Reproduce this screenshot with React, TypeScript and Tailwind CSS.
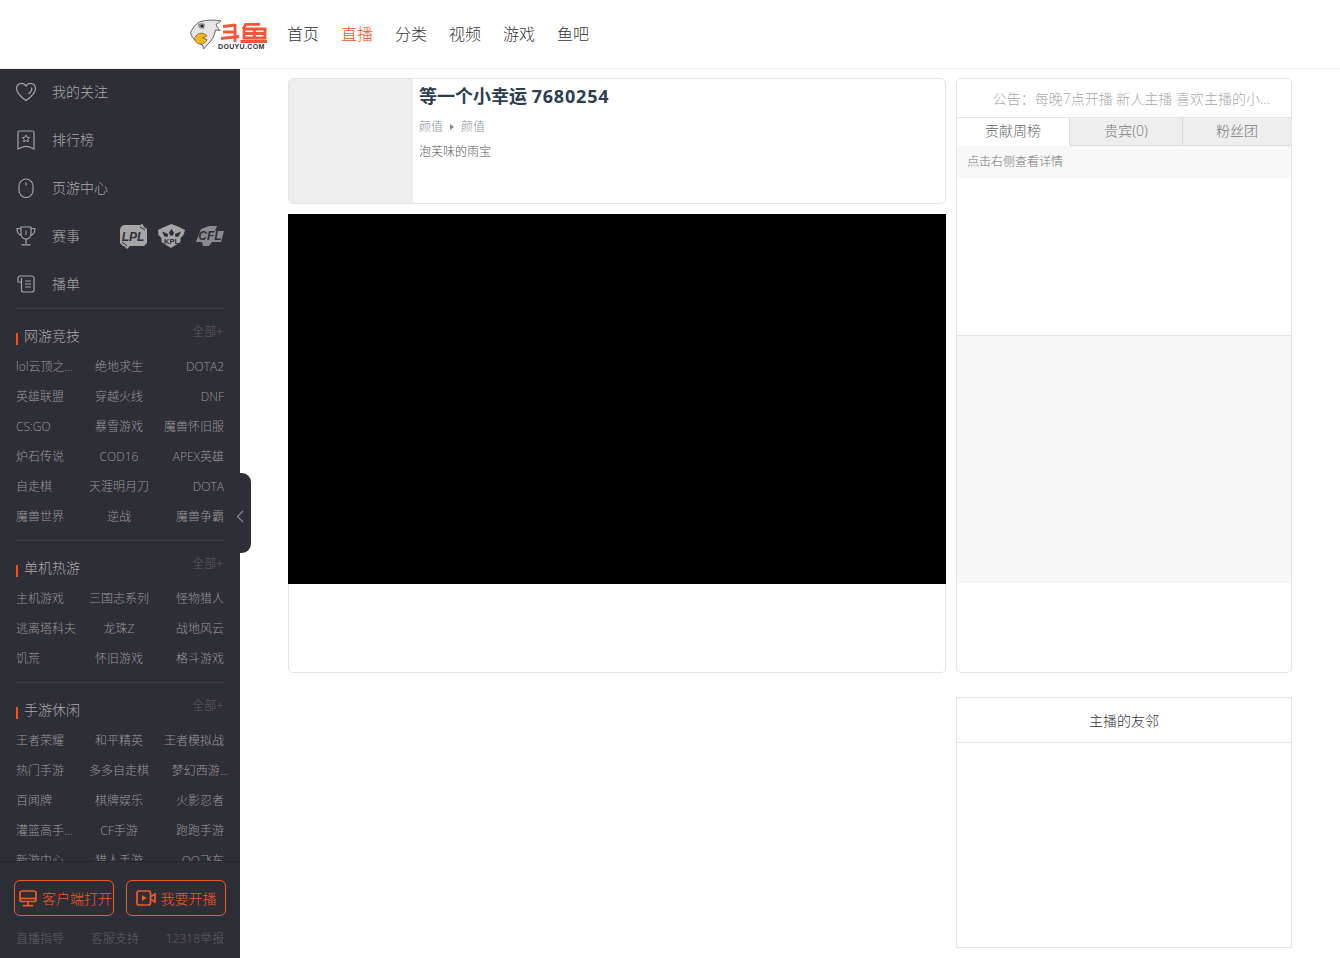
import React from "react";

const font = { fontFamily: '"Open Sans", "Noto Sans CJK SC", sans-serif' };

const sections = [
  {
    title: "网游竞技",
    items: ["lol云顶之...", "绝地求生", "DOTA2", "英雄联盟", "穿越火线", "DNF", "CS:GO", "暴雪游戏", "魔兽怀旧服", "炉石传说", "COD16", "APEX英雄", "自走棋", "天涯明月刀", "DOTA", "魔兽世界", "逆战", "魔兽争霸"],
  },
  {
    title: "单机热游",
    items: ["主机游戏", "三国志系列", "怪物猎人", "逃离塔科夫", "龙珠Z", "战地风云", "饥荒", "怀旧游戏", "格斗游戏"],
  },
  {
    title: "手游休闲",
    items: ["王者荣耀", "和平精英", "王者模拟战", "热门手游", "多多自走棋", "梦幻西游...", "百闻牌", "棋牌娱乐", "火影忍者", "灌篮高手...", "CF手游", "跑跑手游", "新游中心", "猎人手游", "QQ飞车"],
  },
];

function Heart() {
  return (
    <svg className="shrink-0" width="22" height="20" viewBox="0 0 22 20" fill="none" stroke="#a3a3a6" strokeWidth="1.3">
      <path d="M11 18.500C6 15 1.500 11.500 1.500 6.500 1.500 3.500 3.800 1.300 6.500 1.300c1.900 0 3.500 1 4.500 2.700C12 2.300 13.600 1.300 15.500 1.300c2.700 0 5 2.200 5 5.200 0 5-4.500 8.500-9.500 12z" />
      <path d="M16.500 5.500c.8 2-.5 4.500-3 6.500" />
    </svg>
  );
}
function Ribbon() {
  return (
    <svg width="18" height="20" viewBox="0 0 18 20" fill="none" stroke="#a3a3a6" strokeWidth="1.2">
      <path d="M2.500 1h13A1.500 1.500 0 0 1 17 2.500V19l-4-1.800c-2.500-1-5.500-1-8 0L1 19V2.500A1.500 1.500 0 0 1 2.500 1z" />
      <path d="M9 5l1.100 2.300 2.500.3-1.800 1.700.5 2.500L9 10.600l-2.300 1.200.5-2.500-1.800-1.700 2.500-.3z" strokeWidth="1" />
    </svg>
  );
}
function Mouse() {
  return (
    <svg width="16" height="20" viewBox="0 0 16 20" fill="none" stroke="#a3a3a6" strokeWidth="1.2">
      <rect x="1" y="1" width="14" height="18.500" rx="7" />
      <path d="M8 4.500v3" />
    </svg>
  );
}
function Trophy() {
  return (
    <svg width="20" height="20" viewBox="0 0 20 20" fill="none" stroke="#a3a3a6" strokeWidth="1.2">
      <path d="M5 1h10v7c0 3-2.200 5-5 5S5 11 5 8z" />
      <path d="M5 2.500H1c0 3.500 1.500 6 4.500 7M15 2.500h4c0 3.500-1.500 6-4.500 7" />
      <path d="M10 13v5M5.500 18.800h9" />
      <path d="M10 4.500v4.500" strokeWidth="1" />
    </svg>
  );
}
function ListIcon() {
  return (
    <svg width="18" height="18" viewBox="0 0 18 18" fill="none" stroke="#a3a3a6" strokeWidth="1.2">
      <path d="M4.500 3v12a2 2 0 0 0 2 2h8.500a2 2 0 0 0 2-2V3a2 2 0 0 0-2-2H3a2 2 0 0 0-2 2v4h3.500" />
      <path d="M8 6h6M8 9h6M8 12h6" />
    </svg>
  );
}
function Lpl() {
  return (
    <svg width="27" height="25" viewBox="0 0 27 25">
      <path d="M6 1h14.500l2-1.500L24 3l3 2v14l-3 3H10L7 25l-2-2-1-1H3l-3-3V6a5 5 0 0 1 6-5z" fill="#a5a5a5" />
      <path d="M20 3l5 3M2 18l5 4" stroke="#2d2e36" strokeWidth="1" />
      <text x="13" y="16.500" textAnchor="middle" fontSize="12" fontWeight="900" fontStyle="italic" fill="#2d2e36" fontFamily="Liberation Sans">LPL</text>
    </svg>
  );
}
function Kpl() {
  return (
    <svg width="27" height="26" viewBox="0 0 27 26">
      <path d="M0 7l6-3 7.500-3 7.500 3 6 3-1.500 5-3 3v4l-3 2-6.500 4-6.500-4-3-2v-4l-3-3z" fill="#a5a5a5" />
      <path d="M13.500 6l2.500 3.500-1 3h-3l-1-3z" fill="#2d2e36" />
      <path d="M4 8.500l6 2.500-.5 3-3-.5zM23 8.500l-6 2.500.5 3 3-.5z" fill="#2d2e36" />
      <text x="13.500" y="20.500" textAnchor="middle" fontSize="7.500" fontWeight="900" fill="#2d2e36" fontFamily="Liberation Sans">KPL</text>
    </svg>
  );
}
function Cfpl() {
  return (
    <svg width="28" height="20" viewBox="0 0 28 20">
      <path d="M5 3l8-3h8l-2 5h9l-3 11H16l-3 4H7l-1-4H0z" fill="#8b8b8d" />
      <text x="14" y="14" textAnchor="middle" fontSize="12" fontWeight="900" fontStyle="italic" fill="#2d2e36" fontFamily="Liberation Sans">CFL</text>
    </svg>
  );
}
function Monitor() {
  return (
    <svg width="18" height="17" viewBox="0 0 18 17" fill="none" stroke="#f15a24" strokeWidth="1.7">
      <rect x="1" y="1" width="16" height="10.500" rx="2" />
      <path d="M1 8.500h16" />
      <path d="M9 12v3M4 15.700h10" />
    </svg>
  );
}
function Video() {
  return (
    <svg width="20" height="16" viewBox="0 0 20 16" fill="none" stroke="#f15a24" strokeWidth="1.7">
      <rect x="1" y="1" width="13.500" height="14" rx="2" />
      <path d="M6 5v6l4.500-3z" fill="#f15a24" stroke="none" />
      <path d="M15 6.500l4-2.500v8l-4-2.500" />
    </svg>
  );
}
function Logo() {
  return (
    <svg width="78" height="32" viewBox="0 0 78 32">
      <path d="M.5 15C3 9 7 4.500 11 3.500c5-1.500 13-2 20-.5l-5 3.500c1 2 2 4 4 6l-4.500-.5c-1 6-4 11-7.500 14l-4.500 5-1-4C7 25 2.500 21 .5 15z" fill="#e6e6e6" stroke="#666" strokeWidth="1" />
      <path d="M8 6c2.500-1 5-1 7 0l-1 5-5-1z" fill="#8a8a8a" />
      <circle cx="12" cy="8" r="1.300" fill="#222" />
      <path d="M5 19.500c1.500-3.500 5-5 8.500-4 1.500.5 3 1.500 3.500 2.500l-4.500 2 4.500 1.500c-1 3-4 5-7 4.500-3.500-.5-6-3.500-5-6.500z" fill="#f6b71e" stroke="#6b5212" strokeWidth=".7" />
      <g stroke="#f4563a" strokeWidth="2.800" fill="none">
        <path d="M33 8.500L45 7M33 14h11M45 6v18M31 20.500l18-2" />
        <path d="M55 6.300h15M56 6l-3 5M54 11h21v9H54zM64.500 11v9M54 15.500h21M50.500 23.500H77" />
      </g>
      <text x="28" y="30.500" fontSize="7" fontWeight="700" fill="#333" fontFamily="Liberation Sans" letterSpacing=".35">DOUYU.COM</text>
    </svg>
  );
}

export default function App() {
  return (
    <div className="h-[958px] w-[1340px] overflow-hidden bg-white" style={font}>
      <header className="flex h-[69px] items-center border-b border-[#ececec] pl-[190px]">
        <Logo />
        <nav className="ml-[19px] flex gap-[22px] text-[16px] font-light text-[#333]">
          <span>首页</span>
          <span className="text-[#f4511e]">直播</span>
          <span>分类</span>
          <span>视频</span>
          <span>游戏</span>
          <span>鱼吧</span>
        </nav>
      </header>
      <div className="flex h-[889px]">
        <aside className="relative flex h-full w-[240px] shrink-0 flex-col bg-[#2d2e36] font-light">
          <div className="flex-1 overflow-hidden px-4">
            <div className="-mt-px text-[14px] text-[#aaaaaa]">
              {[
                [<Heart key="a" />, "我的关注"],
                [<Ribbon key="a" />, "排行榜"],
                [<Mouse key="a" />, "页游中心"],
              ].map(([icon, label], i) => (
                <div key={i} className="flex h-[48px] items-center">
                  <span className="mr-[16px] flex w-[20px] items-center justify-center">{icon}</span>
                  <span className="pb-[2px]">{label}</span>
                </div>
              ))}
              <div className="flex h-[48px] items-center">
                <span className="mr-[16px] flex w-[20px] items-center justify-center"><Trophy /></span>
                <span className="flex-1 pb-[2px]">赛事</span>
                <div className="flex items-center gap-[11px]"><Lpl /><Kpl /><Cfpl /></div>
              </div>
              <div className="flex h-[48px] items-center">
                <span className="mr-[16px] flex w-[20px] items-center justify-center"><ListIcon /></span>
                <span className="pb-[2px]">播单</span>
              </div>
            </div>
            {sections.map((s) => (
              <section key={s.title} className="border-t border-[#3a3b43] pb-[9px] pt-[12px]">
                <div className="relative h-[30px] pl-[8px] text-[14px] leading-[30px] text-[#aaaaaa]">
                  <span className="absolute bottom-[6px] left-0 h-[12px] w-[2px] bg-[#f4511e]" />
                  {s.title}
                  <span className="absolute right-px top-px text-[12px] leading-[20px] text-[#606167]">全部+</span>
                </div>
                <div className="grid grid-cols-3 text-[12px] text-[#999999]">
                  {s.items.map((it, i) => (
                    <div key={it} className={`h-[30px] whitespace-nowrap leading-[32px] ${i % 3 === 0 ? "text-left" : i % 3 === 1 ? "pr-[2px] text-center" : it.includes("...") ? "pl-[17px] text-left" : "text-right"}`}>
                      {it}
                    </div>
                  ))}
                </div>
              </section>
            ))}
          </div>
          <div className="h-[97px] shrink-0 border-t border-[#25262c] px-[14px] pt-[18px]">
            <div className="flex justify-between">
              <button className="flex h-[36px] w-[100px] items-center gap-[5px] whitespace-nowrap rounded-[6px] border border-[#f15a24] pl-[4px] text-[14px] text-[#f15a24]">
                <Monitor />客户端打开
              </button>
              <button className="flex h-[36px] w-[100px] items-center justify-center gap-[5px] whitespace-nowrap rounded-[6px] border border-[#f15a24] text-[14px] text-[#f15a24]">
                <Video />我要开播
              </button>
            </div>
            <div className="mt-[13px] flex justify-between px-[2px] text-[12px] leading-[20px] text-[#606167]">
              <span>直播指导</span>
              <span>客服支持</span>
              <span>12318举报</span>
            </div>
          </div>
          <div className="absolute left-[232px] top-[404px] flex h-[80px] w-[19px] items-center rounded-r-[9px] bg-[#2d2e36] pl-[4px] pt-[6px]">
            <svg width="8" height="13" viewBox="0 0 8 13" fill="none" stroke="#8f8f92" strokeWidth="1.1"><path d="M7 1L1.500 6.500 7 12" /></svg>
          </div>
        </aside>
        <main className="flex flex-1 gap-[10px] pl-[48px] pt-[9px] font-light">
          <div className="w-[658px]">
            <div className="flex h-[126px] overflow-hidden rounded-[5px] border border-[#e5e5e5]">
              <div className="w-[124px] bg-[#eeeeee]" />
              <div className="pl-[6px]">
                <h1 className="text-[18px] font-bold leading-[34px] text-[#2c3e50]">等一个小幸运 <span className="tracking-[0.8px]">7680254</span></h1>
                <div className="mt-[4px] flex items-center text-[12px] leading-[20px] text-[#8a8f9c]">
                  <span>颜值</span>
                  <span className="mx-[7px] h-0 w-0 border-y-[3px] border-l-[4px] border-y-transparent border-l-[#7b8190]" />
                  <span>颜值</span>
                </div>
                <div className="mt-[5px] text-[12px] leading-[20px] text-[#555]">泡芙味的雨宝</div>
              </div>
            </div>
            <div className="mt-[10px] h-[370px] bg-black" />
            <div className="h-[89px] rounded-b-[5px] border border-t-0 border-[#e5e5e5]" />
          </div>
          <div className="w-[336px]">
            <div className="h-[595px] overflow-hidden rounded-[5px] border border-[#e5e5e5]">
              <div className="flex h-[38px] items-center justify-end whitespace-nowrap pr-[21px] text-[14px] text-[#aaaaaa]">公告：每晚7点开播 新人主播 喜欢主播的小...</div>
              <div className="flex h-[29px] border-t border-[#e5e5e5] text-center text-[14px] leading-[26px] text-[#777]">
                <div className="w-[113px] border-r border-[#dddddd] bg-white text-[#666]">贡献周榜</div>
                <div className="w-[113px] border-b border-r border-[#dddddd] bg-[#eeeeee]">贵宾(0)</div>
                <div className="flex-1 border-b border-[#dddddd] bg-[#eeeeee]">粉丝团</div>
              </div>
              <div className="h-[32px] bg-[#f8f8f8] pl-[10px] text-[12px] leading-[31px] text-[#777]">点击右侧查看详情</div>
              <div className="h-[158px] border-b border-[#e5e5e5]" />
              <div className="h-[247px] bg-[#f7f7f7]" />
            </div>
            <div className="mt-[24px] h-[251px] border border-[#e5e5e5]">
              <div className="h-[45px] border-b border-[#e5e5e5] text-center text-[14px] leading-[46px] text-[#333]">主播的友邻</div>
            </div>
          </div>
        </main>
      </div>
    </div>
  );
}
